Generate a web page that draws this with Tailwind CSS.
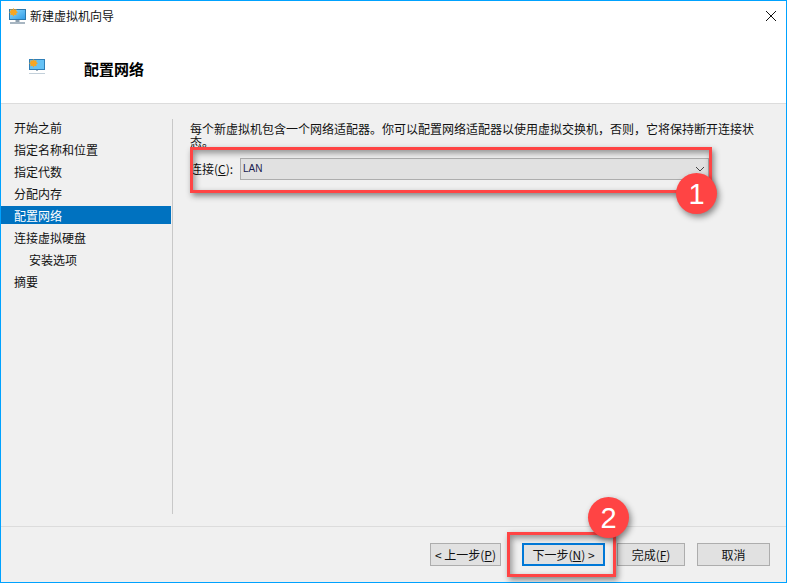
<!DOCTYPE html>
<html lang="zh-CN">
<head>
<meta charset="utf-8">
<title>新建虚拟机向导</title>
<script src="https://cdn.jsdelivr.net/npm/@tailwindcss/browser@4"></script>
</head>
<body class="m-0 overflow-hidden">
<div class="relative w-[787px] h-[583px] flex flex-col bg-[#f0f0f0] border border-[#00a2ff] text-[12px] leading-[14px] text-[#111] font-['Noto_Sans_CJK_SC','Noto_Sans',sans-serif]">
  <!-- title + header -->
  <div class="h-[102px] shrink-0 bg-white flex flex-col">
    <div class="h-[30px] flex items-center pl-[8px] pr-[9px]">
      <svg width="17" height="16" viewBox="0 0 17 16" class="shrink-0">
        <defs><linearGradient id="g1" x1="0" y1="0" x2="1" y2="1"><stop offset="0" stop-color="#8fdcff"/><stop offset="1" stop-color="#2f9ae6"/></linearGradient></defs>
        <rect x="0.5" y="1.5" width="16" height="10" fill="url(#g1)" stroke="#2b78ad"/>
        <path d="M4.5 0 5.5 1.7 7.5 1 7.3 3 9 4.2 7.3 5.3 7.5 7.3 5.5 6.7 4.5 8.4 3.3 6.7 1.3 7.3 1.6 5.3 0 4.2 1.6 3 1.3 1 3.3 1.7Z" fill="#f6a623"/>
        <rect x="6.5" y="12" width="4" height="2" fill="#8d9fae"/>
        <rect x="1" y="14" width="15" height="2" fill="#a8b6c2"/>
      </svg>
      <span class="ml-[4px]">新建虚拟机向导</span>
      <svg width="12" height="12" viewBox="0 0 12 12" class="ml-auto"><path d="M1 1 11 11M11 1 1 11" stroke="#111" stroke-width="1" fill="none"/></svg>
    </div>
    <div class="flex items-center pl-[28px] h-[40px] mt-[18px]">
      <svg width="17" height="16" viewBox="0 0 17 16" class="shrink-0 -translate-y-[2px]">
        <rect x="0.5" y="0.5" width="15" height="10" fill="#66c2f5" stroke="#2f7fb8"/>
        <path d="M4.5 0 5.5 1.7 7.5 1 7.3 3 9 4.2 7.3 5.3 7.5 7.3 5.5 6.7 4.5 8.4 3.3 6.7 1.3 7.3 1.6 5.3 0 4.2 1.6 3 1.3 1 3.3 1.7Z" fill="#f6a623"/>
        <rect x="7" y="11" width="2" height="1" fill="#9fb0bd"/>
        <rect x="0" y="14" width="16" height="1" fill="#c3d0da"/>
      </svg>
      <span class="ml-[38px] text-[15px] font-bold text-black">配置网络</span>
    </div>
  </div>
  <!-- body -->
  <div class="flex-1 min-h-0 flex border-t border-[#dcdcdc]">
    <ul class="w-[170px] shrink-0 pt-[13px] list-none">
      <li class="h-[22px] pl-[13px] flex items-center">开始之前</li>
      <li class="h-[22px] pl-[13px] flex items-center">指定名称和位置</li>
      <li class="h-[22px] pl-[13px] flex items-center">指定代数</li>
      <li class="h-[22px] pl-[13px] flex items-center">分配内存</li>
      <li class="h-[18px] mt-[1px] mb-[3px] pl-[13px] pt-[1px] flex items-center bg-[#0072c0] text-white">配置网络</li>
      <li class="h-[22px] pl-[13px] flex items-center">连接虚拟硬盘</li>
      <li class="h-[22px] pl-[28px] flex items-center">安装选项</li>
      <li class="h-[22px] pl-[13px] flex items-center">摘要</li>
    </ul>
    <div class="w-[1px] mt-[15px] mb-[12px] ml-[1px] bg-[#c8c8c8]"></div>
    <div class="flex-1 pl-[17px] pr-[4px] pt-[18px] overflow-hidden">
      <p class="w-[574px] leading-[13px] m-0">每个新虚拟机包含一个网络适配器。你可以配置网络适配器以使用虚拟交换机，否则，它将保持断开连接状态。</p>
      <div class="flex items-center mt-[10px]">
        <span class="w-[50px] shrink-0">连接(<u>C</u>):</span>
        <div class="w-[469px] h-[22px] shrink-0 flex items-center justify-between bg-[#e1e1e1] border border-[#adadad] pl-[2px] pr-[3px] text-[10px]">
          <span class="font-['Liberation_Sans',sans-serif] text-[#1c1c50]">LAN</span>
          <svg width="10" height="6" viewBox="0 0 10 6"><path d="M1 1 5 5 9 1" stroke="#444" stroke-width="1" fill="none"/></svg>
        </div>
      </div>
    </div>
  </div>
  <!-- footer -->
  <div class="h-[56px] shrink-0 border-t border-[#dcdcdc] flex justify-end items-start pt-[16px] pr-[16px]">
    <button class="w-[71px] h-[23px] bg-[#e1e1e1] border border-[#adadad]">&lt; 上一步(<u>P</u>)</button>
    <button class="w-[83px] h-[23px] ml-[21px] bg-[#e1e1e1] border-2 border-[#0078d7]">下一步(<u>N</u>) &gt;</button>
    <button class="w-[68px] h-[23px] ml-[12px] bg-[#e1e1e1] border border-[#adadad]">完成(<u>F</u>)</button>
    <button class="w-[73px] h-[23px] ml-[12px] bg-[#e1e1e1] border border-[#adadad]">取消</button>
  </div>

  <!-- annotations -->
  <div class="absolute left-[189px] top-[146px] w-[522px] h-[46px] border-[3px] border-[#ff4444] shadow-[2px_3px_6px_rgba(0,0,0,0.45),inset_2px_3px_6px_rgba(0,0,0,0.4)]"></div>
  <div class="absolute left-[675px] top-[172px] w-[41px] h-[41px] rounded-full bg-[#ff4444] shadow-[2px_3px_6px_rgba(0,0,0,0.45)] text-white flex items-center justify-center text-[29px] font-['Liberation_Sans',sans-serif]">1</div>
  <div class="absolute left-[506px] top-[531px] w-[109px] h-[45px] border-[3px] border-[#ff4444] shadow-[2px_3px_6px_rgba(0,0,0,0.45),inset_2px_3px_6px_rgba(0,0,0,0.4)]"></div>
  <div class="absolute left-[587px] top-[496px] w-[41px] h-[41px] rounded-full bg-[#ff4444] shadow-[2px_3px_6px_rgba(0,0,0,0.45)] text-white flex items-center justify-center text-[29px] font-['Liberation_Sans',sans-serif]">2</div>
</div>
</body>
</html>
